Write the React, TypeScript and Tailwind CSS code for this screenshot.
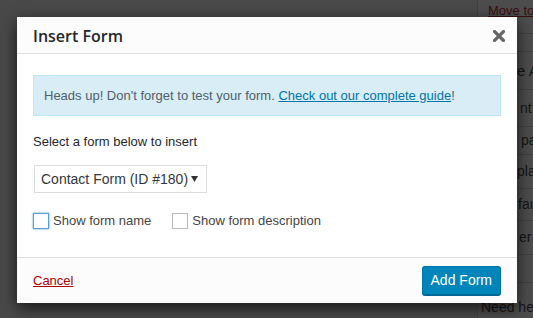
import React from 'react';

const font = { fontFamily: '"Liberation Sans", Arial, sans-serif' };

function SidebarRow({ h, pl, text, bold, border = true }: { h: number; pl: number; text: string; bold?: boolean; border?: boolean }) {
  return (
    <div
      className={`flex items-center whitespace-nowrap text-[#141516] ${bold ? 'text-[15px]' : 'text-[14px]'} ${border ? 'border-b border-[#424242]' : ''}`}
      style={{ height: h, paddingLeft: pl }}
    >
      {text}
    </div>
  );
}

function Backdrop() {
  return (
    <div className="flex h-full w-full bg-[#494949]">
      <div className="flex-1" />
      <div className="flex w-[56px] flex-col overflow-hidden border-l border-[#424242] bg-[#4d4d4d]">
        <div className="flex h-[35px] items-start whitespace-nowrap border-b border-[#424242] pl-[10px] pt-[1px] text-[13px] text-[#3c0d0d] underline">
          Move to Trash
        </div>
        <div className="h-[19px] border-b border-[#424242]" />
        <SidebarRow h={39} pl={39} text="e Attributes" bold />
        <SidebarRow h={38} pl={42} text="nt" />
        <SidebarRow h={29} pl={43} text="parent)" />
        <SidebarRow h={35} pl={39} text="plate" />
        <SidebarRow h={33} pl={40} text="fault Template" />
        <SidebarRow h={35} pl={41} text="er" />
        <div className="h-[29px] border-b border-[#424242]" />
        <div className="whitespace-nowrap pl-[3px] pt-[14px] text-[14px] text-[#141516]">Need help?</div>
      </div>
    </div>
  );
}

function Checkbox({ focused, label }: { focused?: boolean; label: string }) {
  return (
    <label className="flex items-center gap-[4px] text-[13px] text-[#444]">
      <span
        className={`block h-4 w-4 bg-white ${focused ? 'border border-[#5b9dd9] shadow-[0_0_2px_rgba(30,140,190,0.8)]' : 'border border-[#b4b9be]'}`}
      />
      {label}
    </label>
  );
}

export default function App() {
  return (
    <div className="relative h-[318px] w-[533px] overflow-hidden" style={font}>
      <Backdrop />

      {/* Modal */}
      <div className="absolute left-[17px] top-[17px] w-[500px] bg-white shadow-[0_5px_15px_rgba(0,0,0,0.7)]">
        <div className="flex h-[37px] items-center justify-between border-b border-[#ddd] bg-[#fcfcfc] pl-4 pr-3">
          <h1 className="pt-[1px] text-[16px] font-semibold text-[#23282d]" style={{ fontFamily: '"Open Sans", sans-serif' }}>
            Insert Form
          </h1>
          <svg width="12" height="12" viewBox="0 0 12 12" className="mt-[1px]">
            <path d="M1.5 1.5 L10.5 10.5 M10.5 1.5 L1.5 10.5" stroke="#666" strokeWidth="3.2" strokeLinecap="square" />
          </svg>
        </div>

        <div className="h-[203px] px-4 pt-[21px]">
          <div className="flex h-[41px] items-center border border-[#bce8f1] bg-[#d9edf7] px-[10px] text-[13px] text-[#4f5f6b]">
            <span>
              Heads up! Don't forget to test your form.{' '}
              <a className="text-[#0073aa] underline">Check out our complete guide</a>!
            </span>
          </div>

          <p className="mt-[18px] text-[13px] leading-[16px] text-[#23282d]">Select a form below to insert</p>

          <div className="ml-[1px] mt-[15px] flex h-[28px] w-[173px] items-center justify-between border border-[#ddd] bg-white pl-[6px] pr-[8px] text-[14px] text-[#32373c]">
            <span>Contact Form (ID #180)</span>
            <svg width="7" height="6" viewBox="0 0 7 6">
              <path d="M0 0 H7 L3.5 6 Z" fill="#333" />
            </svg>
          </div>

          <div className="mt-[18px] flex items-center gap-[21px]">
            <Checkbox focused label="Show form name" />
            <Checkbox label="Show form description" />
          </div>
        </div>

        <div className="flex h-[46px] items-center justify-between border-t border-[#ddd] bg-[#fcfcfc] px-4">
          <a className="text-[13px] text-[#a00] underline">Cancel</a>
          <button className="h-[29px] rounded-[3px] border border-[#0073aa] border-b-[#006799] bg-[#0085ba] px-[8px] text-[14px] text-white shadow-[0_1px_0_#006799]">
            Add Form
          </button>
        </div>
      </div>
    </div>
  );
}
